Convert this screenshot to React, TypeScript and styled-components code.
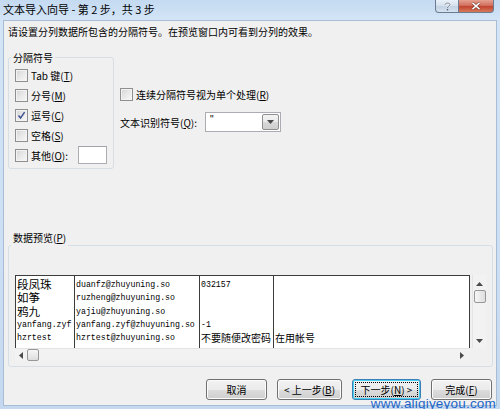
import React from "react";
import styled, { createGlobalStyle, css } from "styled-components";

const Global = createGlobalStyle`
  html, body { margin: 0; padding: 0; }
  body {
    width: 500px; height: 409px; overflow: hidden; background: #fff;
    font-family: "Noto Sans CJK SC", "Liberation Sans", sans-serif;
  }
`;

const Window = styled.div`
  position: relative;
  width: 500px;
  height: 409px;
  box-sizing: border-box;
  display: flex;
  flex-direction: column;
  background: linear-gradient(180deg, #c4daf1 0px, #d3e4f6 20px, #cddff4 60%, #c4d8ef 100%);
  overflow: hidden;
`;

const TitleBar = styled.div`
  height: 20px;
  flex: none;
  display: flex;
  align-items: flex-start;
`;

const TitleText = styled.div`
  padding: 3px 0 0 3px;
  font-size: 11px;
  line-height: 13px;
  color: #000;
  white-space: nowrap;
`;

const CaptionButtons = styled.div`
  margin-left: auto;
  margin-right: 6px;
  display: flex;
`;

const CaptionButton = styled.div<{ $close?: boolean }>`
  height: 13px;
  box-sizing: border-box;
  display: flex;
  align-items: center;
  justify-content: center;
  border: 1px solid #6b7b90;
  border-top: none;
  ${(p) =>
    p.$close
      ? css`
          width: 35px;
          border-left: none;
          border-radius: 0 0 4px 0;
          background: linear-gradient(180deg, #e6a090 0%, #d2705f 45%, #c2452f 55%, #d77a5c 100%);
        `
      : css`
          width: 24px;
          border-radius: 0 0 0 4px;
          background: linear-gradient(180deg, #e9f0f8 0%, #d7e2ee 45%, #c3d2e3 55%, #d6e3f1 100%);
        `}
`;

const Client = styled.div`
  flex: 1;
  margin: 0 3px 3px 3px;
  border: 1px solid #a7bcd5;
  background: #f0f0f0;
  padding: 4px 3px 0 4px;
  display: flex;
  flex-direction: column;
  font-size: 10px;
  color: #000;
`;

const Instruction = styled.div`
  line-height: 14px;
  white-space: nowrap;
`;

const TopSection = styled.div`
  display: flex;
  align-items: flex-start;
  margin-top: 12px;
`;

const Group = styled.fieldset<{ $w?: number }>`
  margin: 0;
  padding: 0 6px 0 2px;
  border: 1px solid #d5dfe5;
  border-radius: 3px;
  min-inline-size: auto;
  ${(p) => (p.$w ? `width: ${p.$w}px;` : "")}
  box-sizing: border-box;
`;

const Legend = styled.legend<{ $drop?: number }>`
  padding: 0 2px ${(p) => p.$drop ?? 0}px 2px;
  line-height: 13px;
  font-size: 10px;
`;

const OptionList = styled.div`
  display: flex;
  flex-direction: column;
  padding: 1px 0 3px 4px;
`;

const OptionRow = styled.label`
  display: flex;
  align-items: center;
  height: 20px;
  gap: 3px;
  white-space: nowrap;
  line-height: 13px;
`;

const Box = styled.span`
  width: 13px;
  height: 13px;
  flex: none;
  box-sizing: border-box;
  border: 1px solid #8f8f8f;
  background: linear-gradient(135deg, #d4d4d4 0%, #ececec 60%, #f8f8f8 100%);
  box-shadow: inset 0 0 0 1px #f3f3f3;
  display: flex;
  align-items: center;
  justify-content: center;
`;

const SmallInput = styled.div`
  width: 29px;
  height: 18px;
  box-sizing: border-box;
  margin-left: 7px;
  background: #fff;
  border: 1px solid #abadb3;
  border-top-color: #a0a3aa;
`;

const RightColumn = styled.div`
  display: flex;
  flex-direction: column;
  margin-left: 6px;
  padding-top: 33px;
`;

const ComboRow = styled.div`
  display: flex;
  align-items: center;
  gap: 8px;
  margin-top: 8px;
  height: 20px;
  white-space: nowrap;
  line-height: 13px;
`;

const Combo = styled.div`
  width: 76px;
  height: 20px;
  box-sizing: border-box;
  border: 1px solid #abadb3;
  background: #fff;
  display: flex;
  align-items: stretch;
`;

const ComboValue = styled.div`
  flex: 1;
  padding: 1px 0 0 4px;
  font-family: "Liberation Sans", sans-serif;
  font-size: 10px;
  line-height: 12px;
  color: #000;
`;

const ComboButton = styled.div`
  width: 17px;
  margin: 1px;
  box-sizing: border-box;
  border: 1px solid #8e8f8f;
  border-radius: 2px;
  background: linear-gradient(180deg, #f4f4f4 0%, #e9e9e9 50%, #d9d9d9 51%, #cfcfcf 100%);
  display: flex;
  align-items: center;
  justify-content: center;
`;

const PreviewGroup = styled(Group)`
  margin-top: 62px;
  padding: 0 6px 5px 2px;
`;

const PreviewArea = styled.div`
  display: grid;
  grid-template-columns: 1fr 14px;
  grid-template-rows: 73px 13px;
  margin: 16px 0 0 4px;
`;

const Table = styled.div`
  display: flex;
  background: #fff;
  border: 1px solid #3c3c3c;
  border-bottom: none;
  margin-right: 2px;
  overflow: hidden;
`;

const Column = styled.div<{ $w?: number }>`
  ${(p) => (p.$w ? `width: ${p.$w}px; flex: none;` : "flex: 1;")}
  box-sizing: border-box;
  border-right: 1px solid #3c3c3c;
  padding: 2px 0 0 1px;
  &:last-child { border-right: none; }
`;

const Line = styled.div`
  height: 13.3px;
  line-height: 13.3px;
  white-space: nowrap;
  font-family: "Liberation Mono", monospace;
  font-size: 8.25px;
  color: #000;
`;

const Cjk = styled.span<{ $size: number }>`
  font-family: "Noto Sans CJK SC", sans-serif;
  font-size: ${(p) => p.$size}px;
  line-height: 13px;
  display: inline-block;
  vertical-align: top;
`;

const VScroll = styled.div`
  background: #f2f2f2;
  border-left: 1px solid #e4e4e4;
  display: flex;
  flex-direction: column;
  align-items: center;
  padding-top: 7px;
  padding-bottom: 5px;
`;

const HScroll = styled.div`
  background: #f2f2f2;
  border-top: 1px solid #e4e4e4;
  margin-right: 2px;
  display: flex;
  align-items: center;
  padding-left: 4px;
  padding-right: 6px;
`;

const Thumb = styled.div<{ $h?: boolean }>`
  box-sizing: border-box;
  border: 1px solid #979797;
  border-radius: 2px;
  ${(p) =>
    p.$h
      ? css`
          width: 12px;
          height: 12px;
          margin-left: 4px;
          background: linear-gradient(180deg, #f6f6f6, #dedede);
        `
      : css`
          width: 12px;
          height: 13px;
          margin-top: 4px;
          background: linear-gradient(90deg, #f6f6f6, #dedede);
        `}
`;

const Spacer = styled.div`
  flex: 1;
`;

const ButtonRow = styled.div`
  display: flex;
  justify-content: flex-end;
  margin-top: 12px;
  margin-right: 1px;
  gap: 10px;
`;

const Button = styled.div<{ $w: number; $focus?: boolean }>`
  width: ${(p) => p.$w}px;
  height: 21px;
  box-sizing: border-box;
  border: 1px solid ${(p) => (p.$focus ? "#3c7fb1" : "#707070")};
  border-radius: 3px;
  background: linear-gradient(180deg, #f2f2f2 0%, #ebebeb 50%, #dddddd 51%, #cfcfcf 100%);
  box-shadow: inset 0 0 0 1px ${(p) => (p.$focus ? "#48d1f8" : "#fcfcfc")};
  display: flex;
  align-items: center;
  justify-content: center;
  padding: 2px;
  font-size: 10px;
  line-height: 13px;
  white-space: nowrap;
`;

const FocusRect = styled.div`
  flex: 1;
  align-self: stretch;
  display: flex;
  align-items: center;
  justify-content: center;
  outline: 1px dotted #000;
  outline-offset: -1px;
`;

const Watermark = styled.div`
  position: absolute;
  right: 4px;
  bottom: -2px;
  font-family: "Liberation Sans", sans-serif;
  font-size: 13.5px;
  line-height: 14px;
  color: #1d66c9;
  letter-spacing: 0.2px;
`;

const Check = ({ checked }: { checked?: boolean }) => (
  <Box>
    {checked && (
      <svg width="9" height="9" viewBox="0 0 9 9">
        <path d="M1.5 4.5 L3.6 7 L7.6 1.2" fill="none" stroke="#3a4f8f" strokeWidth="1.4" />
      </svg>
    )}
  </Box>
);

const Tri = ({ dir }: { dir: "up" | "down" | "left" | "right" }) => {
  const pts = {
    up: "0,4 3.5,0 7,4",
    down: "0,0 7,0 3.5,4",
    left: "4,0 4,7 0,3.5",
    right: "0,0 0,7 4,3.5",
  }[dir];
  const horiz = dir === "left" || dir === "right";
  return (
    <svg width={horiz ? 4 : 7} height={horiz ? 7 : 4} viewBox={horiz ? "0 0 4 7" : "0 0 7 4"}>
      <polygon points={pts} fill="#4a4a4a" />
    </svg>
  );
};

const col1 = [
  <Cjk $size={11.5}>段凤珠</Cjk>,
  <Cjk $size={11.5}>如筝</Cjk>,
  <Cjk $size={11.5}>鸦九</Cjk>,
  "yanfang.zyf",
  "hzrtest",
];
const col2 = [
  "duanfz@zhuyuning.so",
  "ruzheng@zhuyuning.so",
  "yajiu@zhuyuning.so",
  "yanfang.zyf@zhuyuning.so",
  "hzrtest@zhuyuning.so",
];
const col3 = ["032157", "", "", "-1", <Cjk $size={10}>不要随便改密码</Cjk>];
const col4 = ["", "", "", "", <Cjk $size={10}>在用帐号</Cjk>];

const options: { label: React.ReactNode; checked?: boolean }[] = [
  { label: <>Tab 键(<u>T</u>)</> },
  { label: <>分号(<u>M</u>)</> },
  { label: <>逗号(<u>C</u>)</>, checked: true },
  { label: <>空格(<u>S</u>)</> },
];

export default function App() {
  return (
    <Window>
      <Global />
      <TitleBar>
        <TitleText>文本导入向导 - 第 2 步，共 3 步</TitleText>
        <CaptionButtons>
          <CaptionButton>
            <svg width="7" height="9" viewBox="0 0 7 9">
              <path d="M1 2.6 C1 0.6 6 0.6 6 2.6 C6 4.2 3.5 4 3.5 6" fill="none" stroke="#fff" strokeWidth="1.6" />
              <path d="M1 2.6 C1 0.6 6 0.6 6 2.6 C6 4.2 3.5 4 3.5 6" fill="none" stroke="#4d5d73" strokeWidth="0.8" />
              <rect x="2.8" y="7" width="1.4" height="1.4" fill="#4d5d73" />
            </svg>
          </CaptionButton>
          <CaptionButton $close>
            <svg width="10" height="8" viewBox="0 0 10 8">
              <path d="M1.5 0.8 L8.5 7.2 M8.5 0.8 L1.5 7.2" stroke="#5a1f14" strokeWidth="2.6" />
              <path d="M1.5 0.8 L8.5 7.2 M8.5 0.8 L1.5 7.2" stroke="#fff" strokeWidth="1.6" />
            </svg>
          </CaptionButton>
        </CaptionButtons>
      </TitleBar>
      <Client>
        <Instruction>请设置分列数据所包含的分隔符号。在预览窗口内可看到分列的效果。</Instruction>
        <TopSection>
          <Group $w={106}>
            <Legend>分隔符号</Legend>
            <OptionList>
              {options.map((o, i) => (
                <OptionRow key={i}>
                  <Check checked={o.checked} />
                  <span>{o.label}</span>
                </OptionRow>
              ))}
              <OptionRow>
                <Check />
                <span>
                  其他(<u>O</u>):
                </span>
                <SmallInput />
              </OptionRow>
            </OptionList>
          </Group>
          <RightColumn>
            <OptionRow>
              <Check />
              <span>
                连续分隔符号视为单个处理(<u>R</u>)
              </span>
            </OptionRow>
            <ComboRow>
              <span>
                文本识别符号(<u>Q</u>):
              </span>
              <Combo>
                <ComboValue>"</ComboValue>
                <ComboButton>
                  <Tri dir="down" />
                </ComboButton>
              </Combo>
            </ComboRow>
          </RightColumn>
        </TopSection>
        <PreviewGroup>
          <Legend $drop={15}>
            数据预览(<u>P</u>)
          </Legend>
          <PreviewArea>
            <Table>
              <Column $w={59}>
                {col1.map((c, i) => (
                  <Line key={i}>{c}</Line>
                ))}
              </Column>
              <Column $w={125}>
                {col2.map((c, i) => (
                  <Line key={i}>{c}</Line>
                ))}
              </Column>
              <Column $w={74}>
                {col3.map((c, i) => (
                  <Line key={i}>{c}</Line>
                ))}
              </Column>
              <Column>
                {col4.map((c, i) => (
                  <Line key={i}>{c}</Line>
                ))}
              </Column>
            </Table>
            <VScroll>
              <Tri dir="up" />
              <Thumb />
              <Spacer />
              <Tri dir="down" />
            </VScroll>
            <HScroll>
              <Tri dir="left" />
              <Thumb $h />
              <Spacer />
              <Tri dir="right" />
            </HScroll>
            <div />
          </PreviewArea>
        </PreviewGroup>
        <ButtonRow>
          <Button $w={61}>取消</Button>
          <Button $w={65}>&lt; 上一步(<u>B</u>)</Button>
          <Button $w={69} $focus>
            <FocusRect>
              下一步(<u>N</u>) &gt;
            </FocusRect>
          </Button>
          <Button $w={61}>
            完成(<u>F</u>)
          </Button>
        </ButtonRow>
      </Client>
      <Watermark>www.aliqiyeyou.com</Watermark>
    </Window>
  );
}
